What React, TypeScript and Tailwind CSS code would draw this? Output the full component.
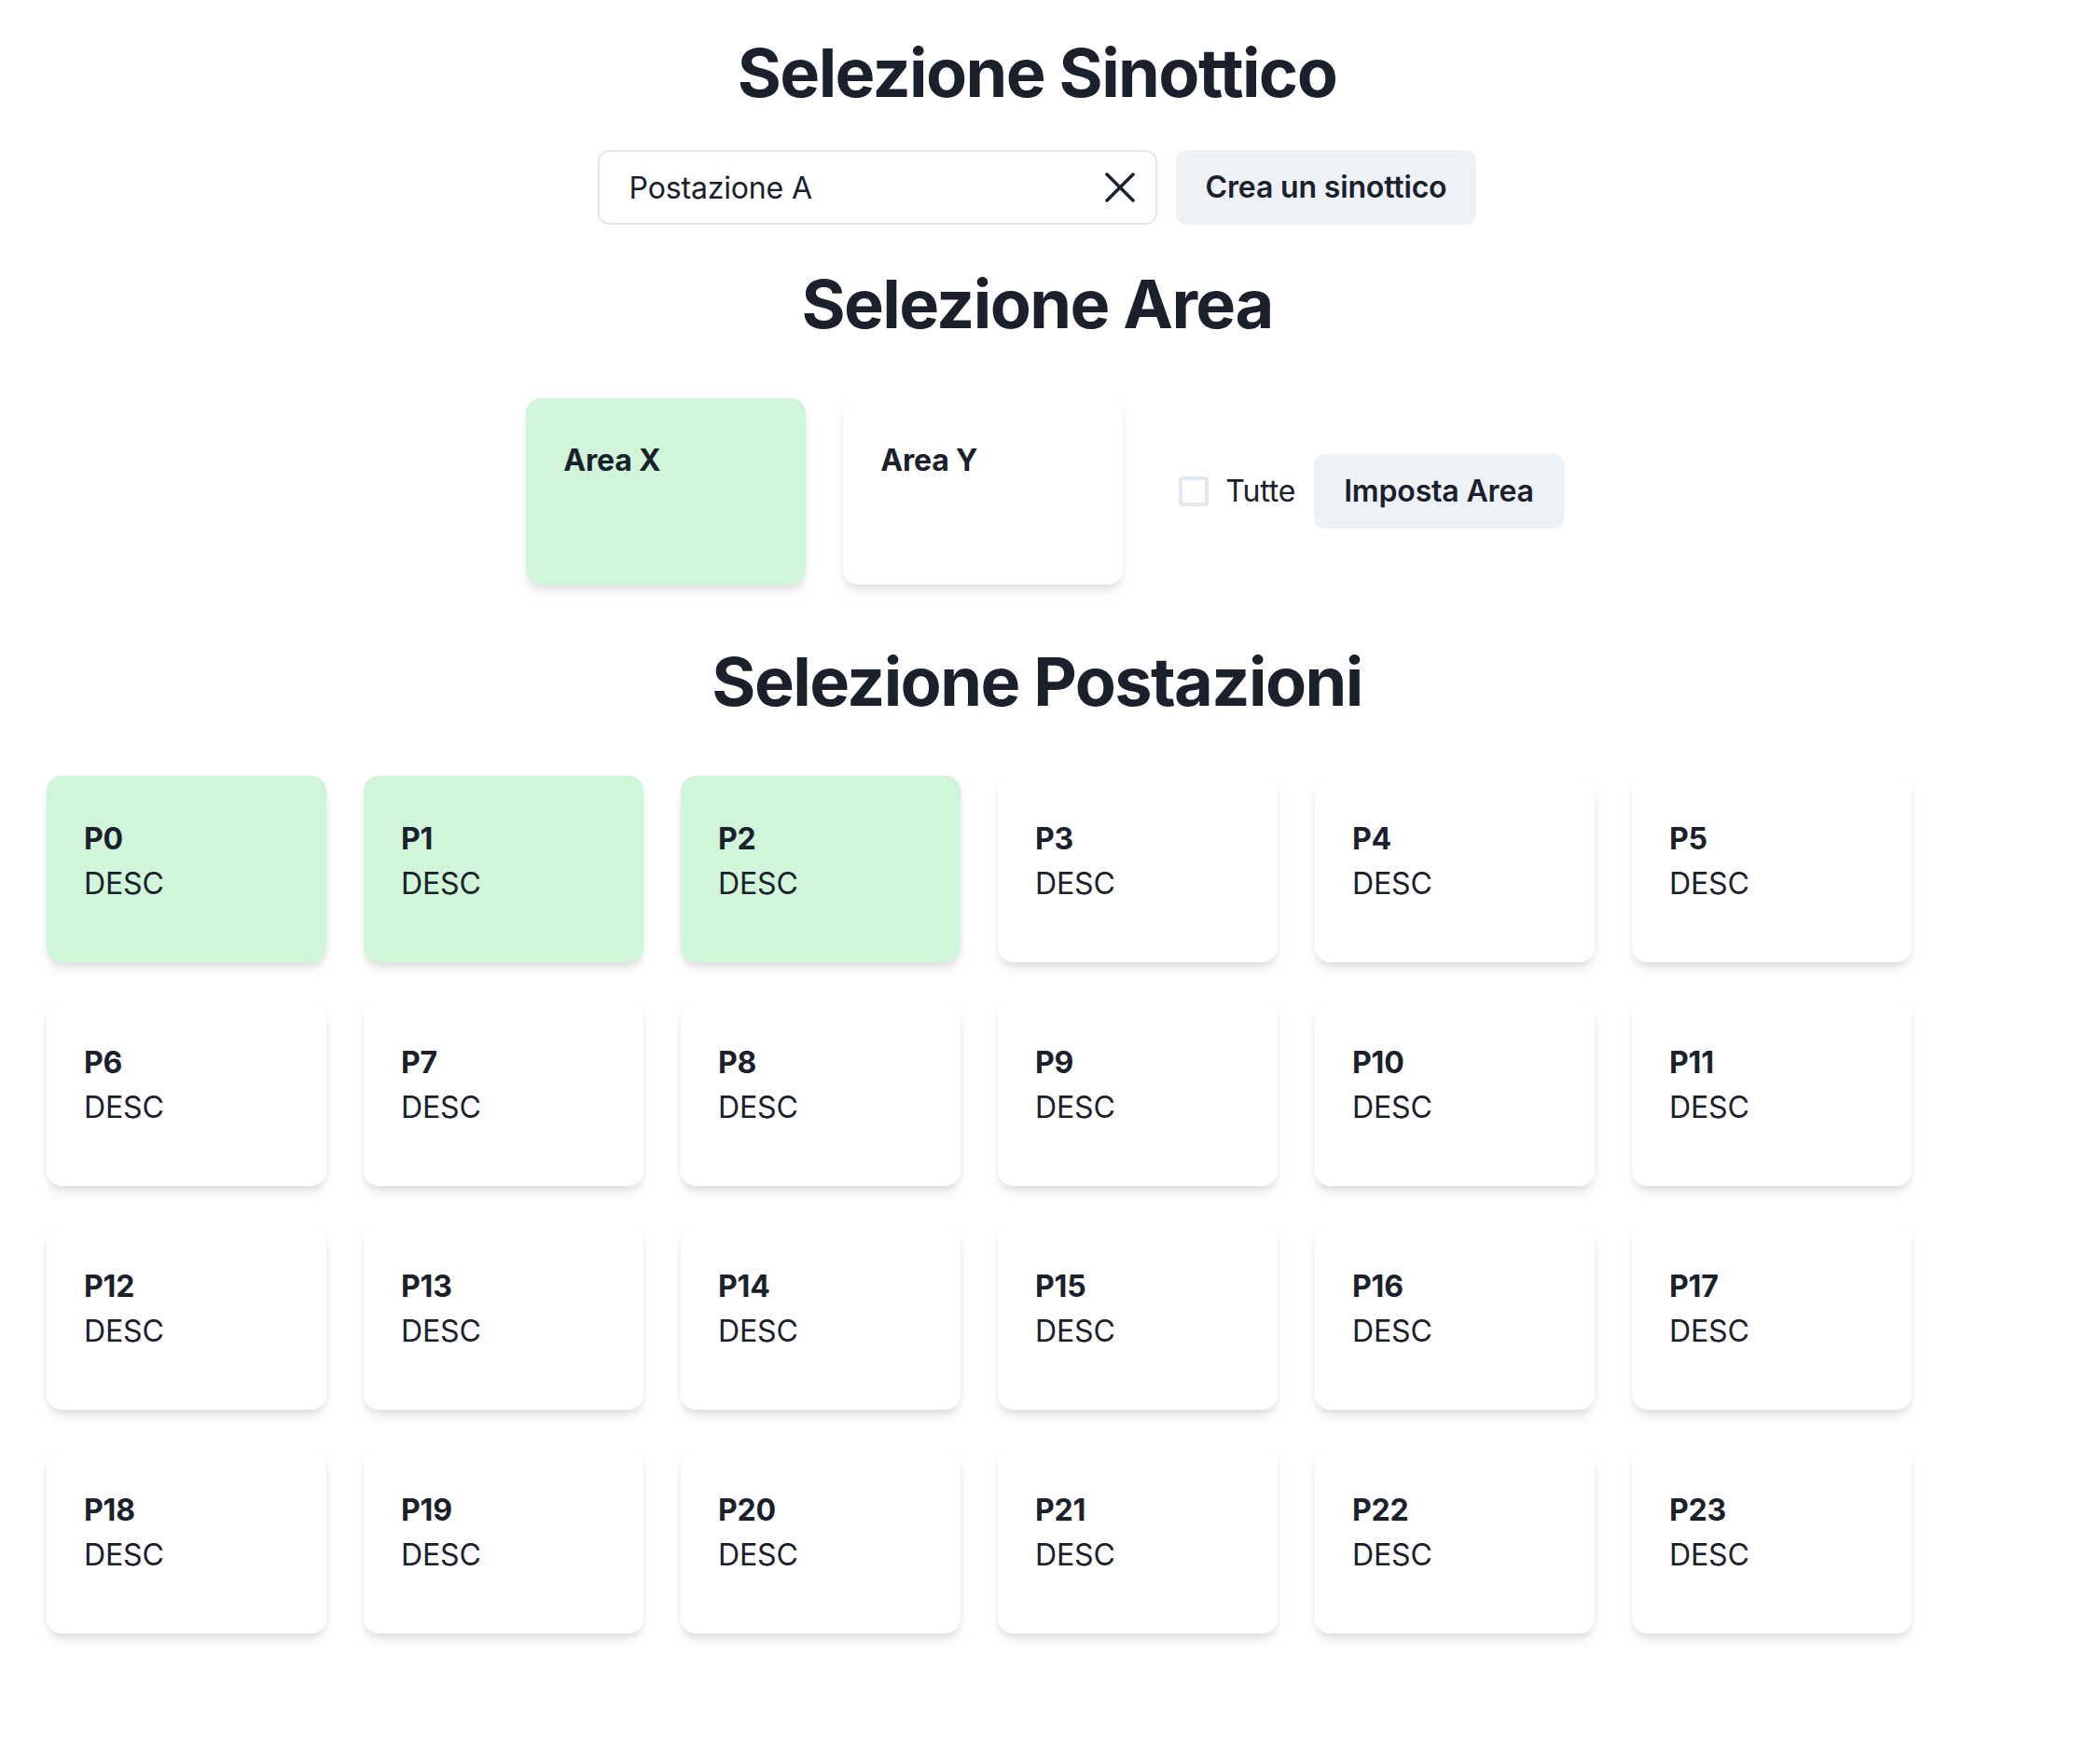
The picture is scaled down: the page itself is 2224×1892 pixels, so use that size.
import { useState } from 'react';

const POSTAZIONI = Array.from({ length: 24 }, (_, i) => ({ id: `P${i}`, desc: 'DESC' }));

function CloseIcon() {
  return (
    <svg width="32" height="32" viewBox="0 0 32 32" fill="none" stroke="#1A202C" strokeWidth="3.5" strokeLinecap="round">
      <line x1="2" y1="2" x2="30" y2="30" />
      <line x1="30" y1="2" x2="2" y2="30" />
    </svg>
  );
}

export default function App() {
  const [sinottico, setSinottico] = useState('Postazione A');
  const [area, setArea] = useState('Area X');
  const [tutte, setTutte] = useState(false);
  const [selected, setSelected] = useState<string[]>(['P0', 'P1', 'P2']);

  const toggle = (id: string) =>
    setSelected((s) => (s.includes(id) ? s.filter((x) => x !== id) : [...s, id]));

  return (
    <div className="min-h-screen w-full bg-white text-[#1A202C] flex flex-col items-center tracking-[-0.01em]" style={{ fontFamily: 'Inter, "Noto Sans", sans-serif' }}>
      <h1 className="mt-[35px] text-[72px] font-bold leading-[1.2] tracking-[-0.022em]">Selezione Sinottico</h1>

      <div className="mt-[40px] flex items-center gap-[20px]">
        <div className="relative w-[600px] h-[80px]">
          <input
            value={sinottico}
            onChange={(e) => setSinottico(e.target.value)}
            className="w-full h-full rounded-[12px] border-2 border-[#E2E8F0] pl-[32px] pr-[80px] text-[32px] outline-none"
          />
          <button
            onClick={() => setSinottico('')}
            className="absolute right-0 top-0 h-[80px] w-[80px] flex items-center justify-center"
          >
            <CloseIcon />
          </button>
        </div>
        <button className="h-[80px] px-[32px] rounded-[12px] bg-[#EDF2F7] text-[32px] font-semibold">
          Crea un sinottico
        </button>
      </div>

      <h2 className="mt-[42px] text-[72px] font-bold leading-[1.2] tracking-[-0.022em]">Selezione Area</h2>

      <div className="mt-[57px] flex items-center pl-[17px]">
        <div className="flex gap-[40px]">
          {['Area X', 'Area Y'].map((a) => (
            <div
              key={a}
              onClick={() => setArea(a)}
              className={`w-[300px] h-[200px] rounded-2xl px-[40px] pt-[43px] cursor-pointer shadow-[0_8px_12px_-2px_rgba(0,0,0,0.1),0_4px_8px_-2px_rgba(0,0,0,0.06)] ${
                area === a ? 'bg-[#D0F5D8]' : 'bg-white'
              }`}
            >
              <div className="text-[32px] font-bold leading-[48px]">{a}</div>
            </div>
          ))}
        </div>
        <label className="ml-[60px] flex items-center gap-[18px] cursor-pointer">
          <span
            onClick={() => setTutte(!tutte)}
            className={`w-[32px] h-[32px] rounded-[4px] border-[4px] ${tutte ? 'bg-[#38A169] border-[#38A169]' : 'border-[#E2E8F0]'}`}
          />
          <span className="text-[32px] leading-[48px]">Tutte</span>
        </label>
        <button className="ml-[20px] h-[80px] px-[32px] rounded-[12px] bg-[#EDF2F7] text-[32px] font-semibold">
          Imposta Area
        </button>
      </div>

      <h2 className="mt-[61px] text-[72px] font-bold leading-[1.2] tracking-[-0.022em]">Selezione Postazioni</h2>

      <div className="mt-[58px] w-full px-[50px] flex flex-wrap gap-[40px]">
        {POSTAZIONI.map((p) => (
          <div
            key={p.id}
            onClick={() => toggle(p.id)}
            className={`w-[300px] h-[200px] rounded-2xl px-[40px] pt-[44px] cursor-pointer shadow-[0_8px_12px_-2px_rgba(0,0,0,0.1),0_4px_8px_-2px_rgba(0,0,0,0.06)] ${
              selected.includes(p.id) ? 'bg-[#D0F5D8]' : 'bg-white'
            }`}
          >
            <div className="text-[32px] font-bold leading-[48px]">{p.id}</div>
            <div className="text-[32px] leading-[48px]">{p.desc}</div>
          </div>
        ))}
      </div>
    </div>
  );
}
